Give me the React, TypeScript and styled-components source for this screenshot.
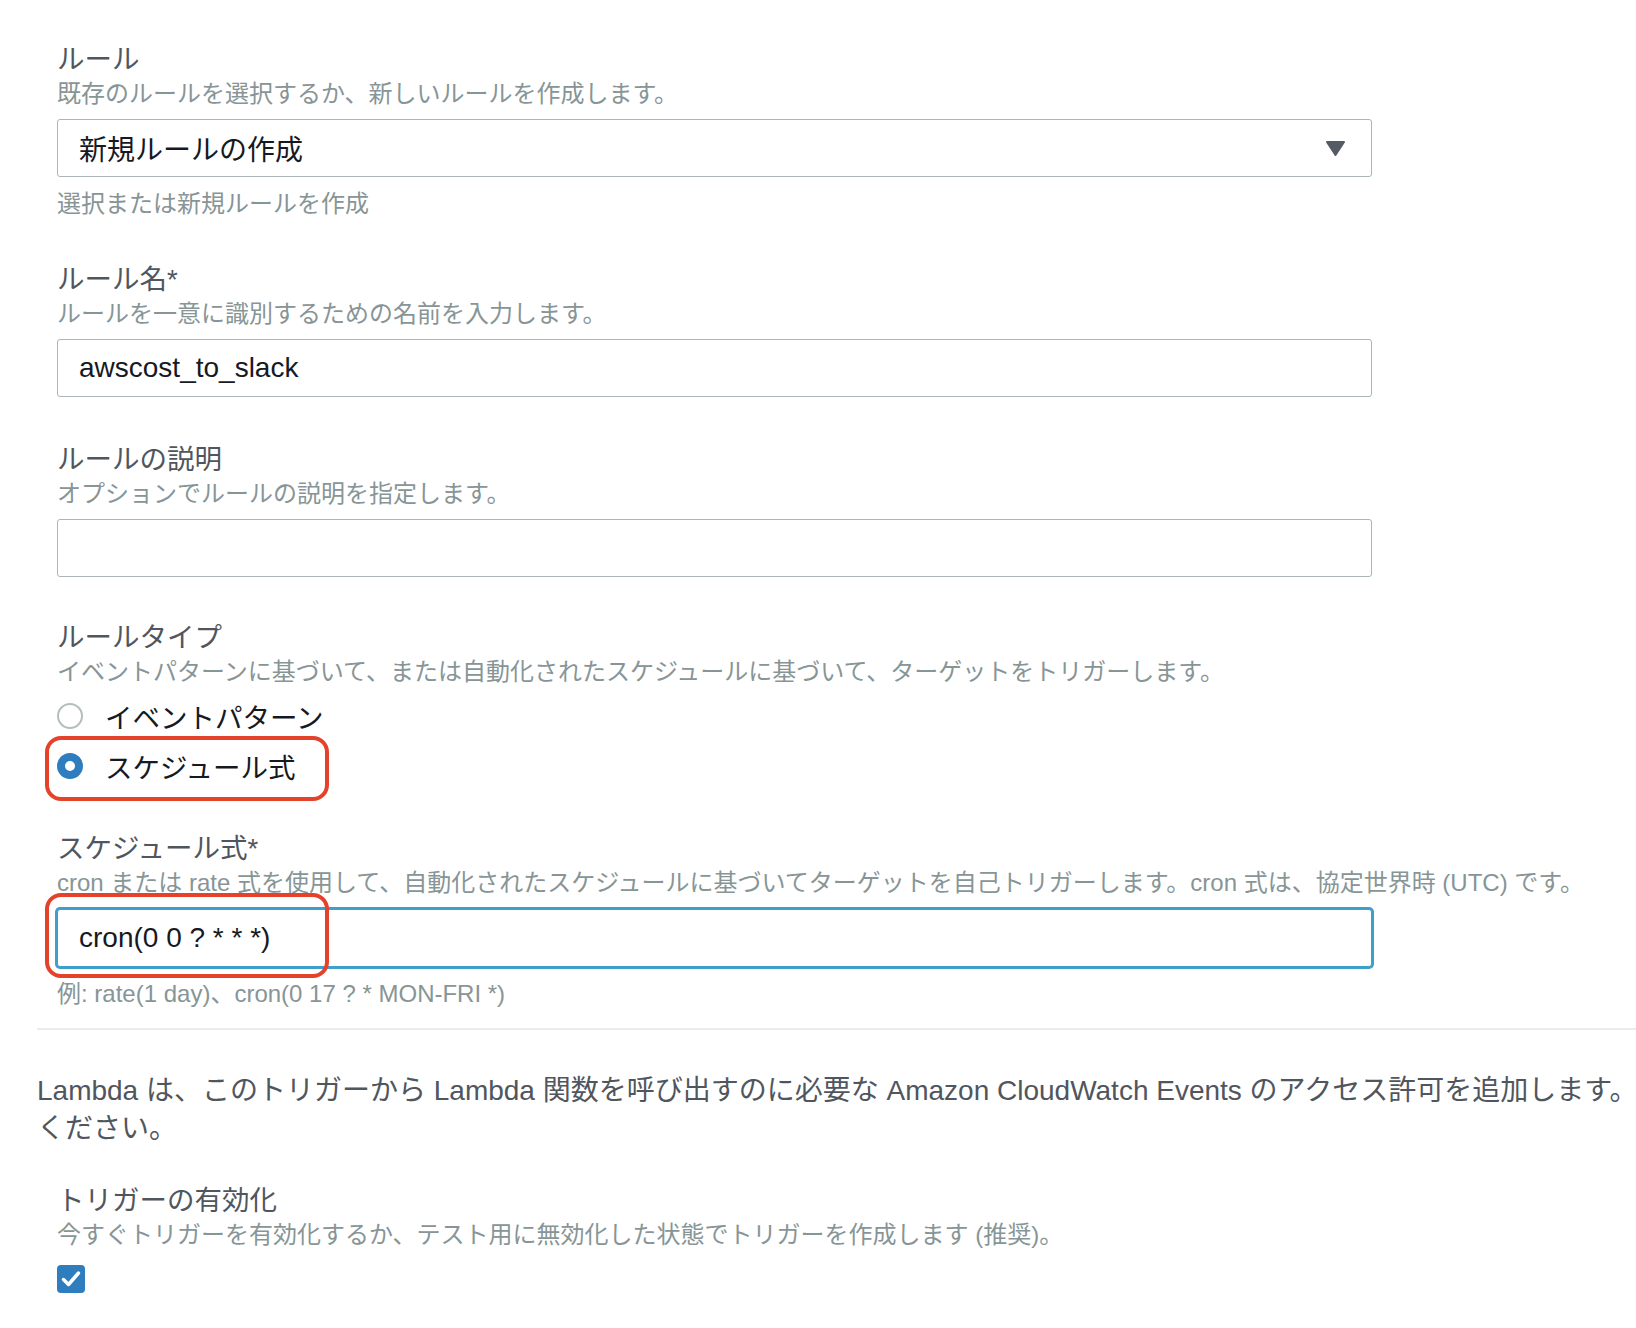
import * as React from "react";
import styled, { createGlobalStyle } from "styled-components";

const GlobalStyle = createGlobalStyle`
  body {
    margin: 0;
    background: #fff;
    font-family: "Liberation Sans", "Noto Sans CJK JP", sans-serif;
    overflow-x: hidden;
  }
`;

const Page = styled.div`
  padding: 43px 0 40px 37px;
`;

const Field = styled.div<{ $top?: number }>`
  padding-left: 20px;
  margin-top: ${(p) => p.$top ?? 0}px;
`;

const Label = styled.div`
  font-size: 27.5px;
  line-height: 34px;
  color: #50565e;
`;

const Description = styled.div`
  font-size: 24px;
  line-height: 34px;
  color: #879596;
  white-space: nowrap;
`;

const Hint = styled.div<{ $top: number }>`
  margin-top: ${(p) => p.$top}px;
  font-size: 24px;
  line-height: 34px;
  color: #879596;
  white-space: nowrap;
`;

const SelectBox = styled.div`
  margin-top: 8px;
  width: 1315px;
  height: 58px;
  box-sizing: border-box;
  border: 1px solid #aab7b8;
  border-radius: 3px;
  display: flex;
  align-items: center;
  justify-content: space-between;
  padding: 0 25px 0 21px;
  font-size: 28px;
  color: #16191f;
`;

const ControlWrap = styled.div<{ $top: number }>`
  position: relative;
  margin-top: ${(p) => p.$top}px;
  width: 1315px;
`;

const TextInput = styled.input<{ $focused?: boolean }>`
  display: block;
  width: 100%;
  height: 58px;
  box-sizing: border-box;
  border: 1px solid ${(p) => (p.$focused ? "#3f9fca" : "#aab7b8")};
  box-shadow: ${(p) => (p.$focused ? "0 0 0 2px #3f9fca" : "none")};
  border-radius: 3px;
  padding: 0 21px;
  font-family: inherit;
  font-size: 28px;
  color: #16191f;
  background: #fff;
  outline: none;
`;

const RadioGroup = styled.div`
  margin-top: 2px;
  display: flex;
  flex-direction: column;
`;

const RadioRow = styled.label`
  position: relative;
  display: flex;
  align-items: center;
  gap: 22px;
  height: 50px;
  font-size: 27.5px;
  color: #16191f;
`;

const RadioDot = styled.span<{ $checked?: boolean }>`
  flex-shrink: 0;
  width: 26px;
  height: 26px;
  box-sizing: border-box;
  border-radius: 50%;
  background: #fff;
  border: ${(p) => (p.$checked ? "8px solid #2e7dbf" : "2px solid #b4bebf")};
`;

const Annotation = styled.div<{ $top: number; $height: number }>`
  position: absolute;
  left: -12px;
  top: ${(p) => p.$top}px;
  width: 284px;
  height: ${(p) => p.$height}px;
  box-sizing: border-box;
  border: 4px solid #e5422b;
  border-radius: 16px;
  pointer-events: none;
`;

const Divider = styled.div`
  margin-top: 17px;
  height: 2px;
  background: #e9ebed;
`;

const Notice = styled.p`
  margin: 42px 0 0;
  font-size: 28px;
  line-height: 38px;
  color: #50565e;
  white-space: nowrap;
`;

const CheckBox = styled.span`
  margin-top: 13px;
  display: flex;
  align-items: center;
  justify-content: center;
  width: 28px;
  height: 28px;
  border-radius: 4px;
  background: #2e7dbf;
`;

const Arrow = () => (
  <svg width="21" height="17" viewBox="0 0 21 17">
    <path d="M2 2 H19 L10.5 15 Z" fill="#545b64" stroke="#545b64" strokeWidth="2" strokeLinejoin="round" />
  </svg>
);

const App: React.FC = () => {
  return (
    <Page>
      <GlobalStyle />
      <Field>
        <Label>ルール</Label>
        <Description>既存のルールを選択するか、新しいルールを作成します。</Description>
        <SelectBox>
          <span>新規ルールの作成</span>
          <Arrow />
        </SelectBox>
        <Hint $top={10}>選択または新規ルールを作成</Hint>
      </Field>

      <Field $top={42}>
        <Label>ルール名*</Label>
        <Description>ルールを一意に識別するための名前を入力します。</Description>
        <ControlWrap $top={8}>
          <TextInput readOnly defaultValue="awscost_to_slack" />
        </ControlWrap>
      </Field>

      <Field $top={46}>
        <Label>ルールの説明</Label>
        <Description>オプションでルールの説明を指定します。</Description>
        <ControlWrap $top={8}>
          <TextInput readOnly defaultValue="" />
        </ControlWrap>
      </Field>

      <Field $top={44}>
        <Label>ルールタイプ</Label>
        <Description>
          イベントパターンに基づいて、または自動化されたスケジュールに基づいて、ターゲットをトリガーします。
        </Description>
        <RadioGroup>
          <RadioRow>
            <RadioDot />
            イベントパターン
          </RadioRow>
          <RadioRow>
            <RadioDot $checked />
            スケジュール式
            <Annotation $top={-5} $height={65} />
          </RadioRow>
        </RadioGroup>
      </Field>

      <Field $top={41}>
        <Label>スケジュール式*</Label>
        <Description>
          cron または rate 式を使用して、自動化されたスケジュールに基づいてターゲットを自己トリガーします。cron 式は、協定世界時 (UTC) です。
        </Description>
        <ControlWrap $top={9}>
          <TextInput $focused readOnly defaultValue="cron(0 0 ? * * *)" />
          <Annotation $top={-16} $height={85} />
        </ControlWrap>
        <Hint $top={10}>例: rate(1 day)、cron(0 17 ? * MON-FRI *)</Hint>
      </Field>

      <Divider />

      <Notice>
        Lambda は、このトリガーから Lambda 関数を呼び出すのに必要な Amazon CloudWatch Events のアクセス許可を追加します。
        <br />
        ください。
      </Notice>

      <Field $top={36}>
        <Label>トリガーの有効化</Label>
        <Description>今すぐトリガーを有効化するか、テスト用に無効化した状態でトリガーを作成します (推奨)。</Description>
        <CheckBox>
          <svg width="20" height="18" viewBox="0 0 20 18">
            <path d="M2.5 9.5 L7.5 14.5 L17.5 3" fill="none" stroke="#fff" strokeWidth="3.5" strokeLinecap="round" strokeLinejoin="round" />
          </svg>
        </CheckBox>
      </Field>
    </Page>
  );
};

export default App;
